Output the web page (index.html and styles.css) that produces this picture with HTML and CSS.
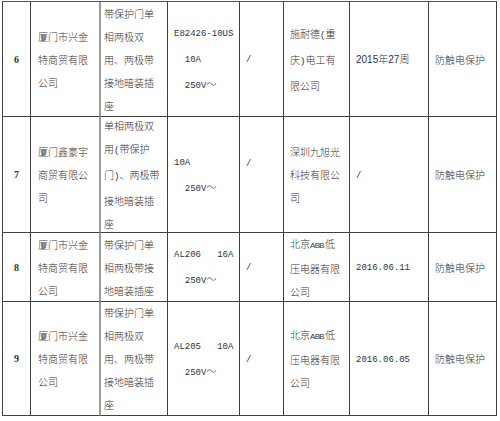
FILE: index.html
```html
<!DOCTYPE html>
<html lang="zh">
<head>
<meta charset="utf-8">
<title>产品信息表</title>
<link rel="stylesheet" href="styles.css">
</head>
<body>
<div class="sheet">
  <div class="cell num">6</div>
  <div class="cell"><p>厦门市兴金<br>特商贸有限<br>公司</p></div>
  <div class="cell"><p>带保护门单<br>相两极双<br>用、两极带<br>接地暗装插<br>座</p></div>
  <div class="cell"><p><span class="m">E82426-10US</span><br><span class="m">  10A</span><br><span class="m">  250V</span>～</p></div>
  <div class="cell"><p><span class="m">/</span></p></div>
  <div class="cell"><p>施耐德<span class="m">(</span>重<br>庆<span class="m">)</span>电工有<br>限公司</p></div>
  <div class="cell"><p><span class="s">2015</span>年<span class="s">27</span>周</p></div>
  <div class="cell"><p>防触电保护</p></div>

  <div class="cell num">7</div>
  <div class="cell"><p>厦门鑫豪宇<br>商贸有限公<br>司</p></div>
  <div class="cell"><p>单相两极双<br>用<span class="m">(</span>带保护<br>门<span class="m">)</span>、两极带<br>接地暗装插<br>座</p></div>
  <div class="cell"><p><span class="m">10A</span><br><span class="m">  250V</span>～</p></div>
  <div class="cell"><p><span class="m">/</span><br>&nbsp;</p></div>
  <div class="cell"><p>深圳九旭光<br>科技有限公<br>司</p></div>
  <div class="cell"><p><span class="m">/</span></p></div>
  <div class="cell"><p>防触电保护</p></div>

  <div class="cell num">8</div>
  <div class="cell"><p>厦门市兴金<br>特商贸有限<br>公司</p></div>
  <div class="cell"><p>带保护门单<br>相两极带接<br>地暗装插座</p></div>
  <div class="cell"><p><span class="m">AL206   16A</span><br><span class="m">  250V</span>～</p></div>
  <div class="cell"><p><span class="m">/</span></p></div>
  <div class="cell"><p>北京<span class="abb">ABB</span>低<br>压电器有限<br>公司</p></div>
  <div class="cell"><p><span class="m">2016.06.11</span></p></div>
  <div class="cell"><p>防触电保护</p></div>

  <div class="cell num">9</div>
  <div class="cell"><p>厦门市兴金<br>特商贸有限<br>公司</p></div>
  <div class="cell"><p>带保护门单<br>相两极双<br>用、两极带<br>接地暗装插<br>座</p></div>
  <div class="cell"><p><span class="m">AL205   10A</span><br><span class="m">  250V</span>～</p></div>
  <div class="cell"><p><span class="m">/</span></p></div>
  <div class="cell"><p>北京<span class="abb">ABB</span>低<br>压电器有限<br>公司</p></div>
  <div class="cell"><p><span class="m">2016.06.05</span></p></div>
  <div class="cell"><p>防触电保护</p></div>
</div>
</body>
</html>
```

FILE: styles.css
```css
html, body {
  margin: 0;
  padding: 0;
  background: #ffffff;
}

.sheet {
  display: grid;
  grid-template-columns: 28px 70px 67px 72px 44px 66px 79px 68px;
  grid-template-rows: 115px 116px 69px 114px;
  width: max-content;
  margin: 1px 0 0 2px;
  border-left: 1px solid #404040;
  border-top: 1px solid #555555;
  font-family: "Noto Sans CJK SC", sans-serif;
  font-size: 10px;
  font-weight: 300;
  line-height: 23px;
  color: #333333;
}

.cell {
  box-sizing: border-box;
  display: flex;
  align-items: center;
  padding: 0 4px 0 6px;
  border-right: 1px solid #404040;
  border-bottom: 1px solid #404040;
  overflow: visible;
}

.cell:nth-child(8n+2) {
  border-right: 2px solid #9a9a9a;
  padding-left: 7px;
}

.cell:nth-child(8n+3) {
  padding-left: 3px;
}

.cell p {
  margin: 0;
  white-space: nowrap;
}

.num {
  justify-content: center;
  padding: 0;
  font-weight: bold;
  font-family: "Liberation Serif", serif;
  font-size: 10px;
}

.m {
  font-family: "Liberation Mono", monospace;
  font-size: 9px;
  font-weight: normal;
  white-space: pre;
}

.s {
  font-family: "Liberation Sans", sans-serif;
  font-size: 10px;
  font-weight: normal;
}

.abb {
  font-family: "Liberation Sans", sans-serif;
  font-size: 8px;
  font-weight: normal;
  letter-spacing: -0.7px;
  margin-right: 1px;
}
```
